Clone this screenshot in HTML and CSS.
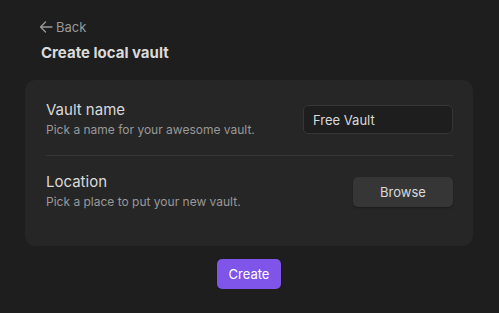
FILE: index.html
```html
<!DOCTYPE html>
<html>
<head>
<meta charset="utf-8">
<link rel="stylesheet" href="styles.css">
</head>
<body>
<div class="page">
  <div class="back">
    <svg class="back-icon" width="14" height="14" viewBox="0 0 14 14" fill="none" stroke="currentColor" stroke-width="1.3" stroke-linecap="round" stroke-linejoin="round"><path d="M13 7H1.5M6.5 2L1.5 7l5 5"/></svg>
    <span>Back</span>
  </div>
  <h1 class="title">Create local vault</h1>
  <div class="card">
    <div class="row">
      <div class="info">
        <div class="label">Vault name</div>
        <div class="desc">Pick a name for your awesome vault.</div>
      </div>
      <div class="input">Free Vault</div>
    </div>
    <div class="row row-2">
      <div class="info">
        <div class="label">Location</div>
        <div class="desc">Pick a place to put your new vault.</div>
      </div>
      <button class="btn">Browse</button>
    </div>
  </div>
  <div class="actions">
    <button class="btn-primary">Create</button>
  </div>
</div>
</body>
</html>
```
FILE: styles.css
```css
html, body {
  margin: 0;
  background: #1e1e1e;
  font-family: Inter, "Noto Sans", sans-serif;
  color: #dadada;
}
.page {
  padding: 18px 26px 0 25px;
}
.back {
  display: flex;
  align-items: center;
  gap: 3px;
  height: 18px;
  margin-left: 14px;
  font-size: 13px;
  color: #999;
}
.back-icon { display: block; }
.title {
  margin: 7px 0 17px 16px;
  font-size: 15px;
  line-height: 20px;
  font-weight: 700;
  color: #dadada;
}
.card {
  background: #262626;
  border-radius: 10px;
  padding: 20px 20px 35px 21px;
}
.row {
  display: flex;
  align-items: center;
  justify-content: space-between;
  padding-bottom: 16px;
  border-bottom: 1px solid #363636;
}
.row-2 {
  border-bottom: none;
  padding: 16px 0 0;
}
.label {
  font-size: 15px;
  line-height: 20px;
  color: #dadada;
}
.desc {
  margin-top: 1px;
  font-size: 12px;
  line-height: 18px;
  color: #999;
}
.input {
  box-sizing: border-box;
  width: 150px;
  height: 29px;
  padding: 0 9px;
  display: flex;
  align-items: center;
  background: #1e1e1e;
  border: 1px solid #363636;
  border-radius: 5px;
  font-size: 13px;
  color: #dadada;
}
.btn {
  box-sizing: border-box;
  width: 100px;
  height: 30px;
  border: none;
  border-radius: 5px;
  background: #363636;
  color: #dadada;
  font-family: inherit;
  font-size: 13px;
  box-shadow: 0 1px 2px rgba(0,0,0,0.3);
}
.actions {
  display: flex;
  justify-content: center;
  margin-top: 13px;
}
.btn-primary {
  width: 64px;
  height: 30px;
  border: none;
  border-radius: 5px;
  background: #7f55e9;
  color: #fff;
  font-family: inherit;
  font-size: 13px;
  box-shadow: 0 1px 2px rgba(0,0,0,0.3);
}
```
